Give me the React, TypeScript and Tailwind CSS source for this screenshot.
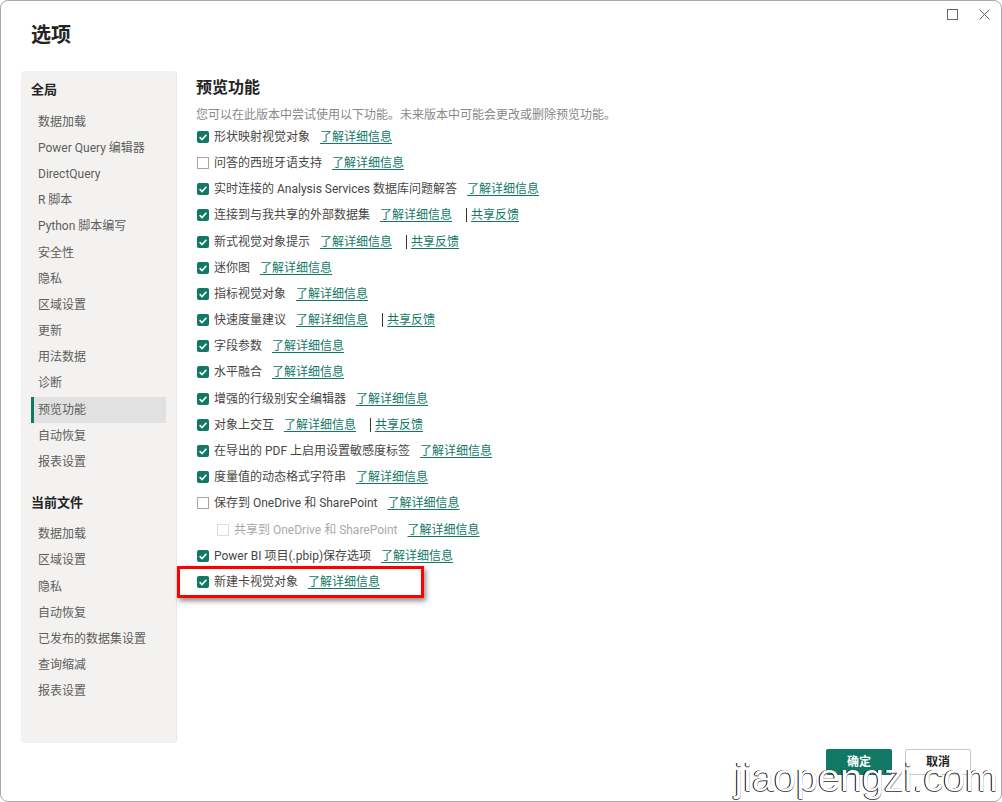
const globalItems = ["数据加载", "Power Query 编辑器", "DirectQuery", "R 脚本", "Python 脚本编写", "安全性", "隐私", "区域设置", "更新", "用法数据", "诊断", "预览功能", "自动恢复", "报表设置"]
const fileItems = ["数据加载", "区域设置", "隐私", "自动恢复", "已发布的数据集设置", "查询缩减", "报表设置"]

interface Feature {
  label: string
  checked?: boolean
  share?: boolean
  disabled?: boolean
  marked?: boolean
}

const features: Feature[] = [
  { label: "形状映射视觉对象", checked: true },
  { label: "问答的西班牙语支持" },
  { label: "实时连接的 Analysis Services 数据库问题解答", checked: true },
  { label: "连接到与我共享的外部数据集", checked: true, share: true },
  { label: "新式视觉对象提示", checked: true, share: true },
  { label: "迷你图", checked: true },
  { label: "指标视觉对象", checked: true },
  { label: "快速度量建议", checked: true, share: true },
  { label: "字段参数", checked: true },
  { label: "水平融合", checked: true },
  { label: "增强的行级别安全编辑器", checked: true },
  { label: "对象上交互", checked: true, share: true },
  { label: "在导出的 PDF 上启用设置敏感度标签", checked: true },
  { label: "度量值的动态格式字符串", checked: true },
  { label: "保存到 OneDrive 和 SharePoint" },
  { label: "共享到 OneDrive 和 SharePoint", disabled: true },
  { label: "Power BI 项目(.pbip)保存选项", checked: true },
  { label: "新建卡视觉对象", checked: true, marked: true },
]

function Checkbox({ checked, disabled }: { checked?: boolean; disabled?: boolean }) {
  if (checked) {
    return (
      <span className="flex h-[12px] w-[12px] shrink-0 items-center justify-center rounded-[2px] bg-[#117865]">
        <svg width="10" height="10" viewBox="0 0 10 10" fill="none">
          <path d="M1.6 5.2 4 7.5 8.4 2.8" stroke="white" strokeWidth="1.6" />
        </svg>
      </span>
    )
  }
  return (
    <span className={`h-[12px] w-[12px] shrink-0 border ${disabled ? "border-[#dcdcdc]" : "border-[#a6a6a6]"}`} />
  )
}

function SideList({ title, items, active }: { title: string; items: string[]; active?: string }) {
  return (
    <div>
      <div className="flex h-[20px] items-center pl-[10px] text-[13px] font-semibold text-[#252423]">{title}</div>
      <div className="mt-[8.5px] flex flex-col">
        {items.map((item) => (
          <div
            key={item}
            className={`mx-[10px] flex h-[26.2px] items-center border-l-[3px] pl-[4px] text-[12px] text-[#605e5c] ${
              item === active ? "border-[#117865] bg-[#e1e1e1]" : "border-transparent"
            }`}
          >
            {item}
          </div>
        ))}
      </div>
    </div>
  )
}

function FeatureRow({ feature }: { feature: Feature }) {
  return (
    <div className={`relative flex h-[26.2px] items-center text-[12px] ${feature.disabled ? "pl-[21px]" : "pl-[1px]"}`}>
      <Checkbox checked={feature.checked} disabled={feature.disabled} />
      <span className={`ml-[5px] ${feature.disabled ? "text-[#a9a9a9]" : "text-[#484644]"}`}>{feature.label}</span>
      <a className="ml-[10px] text-[#117865] underline underline-offset-2">了解详细信息</a>
      {feature.share && (
        <>
          <span className="ml-[14px] h-[14px] w-px bg-[#333]" />
          <a className="ml-[4px] text-[#117865] underline underline-offset-2">共享反馈</a>
        </>
      )}
      {feature.marked && (
        <div className="absolute left-[-19px] top-[-3px] h-[32px] w-[247px] border-[3px] border-[#ff0000] shadow-[2px_3px_5px_rgba(0,0,0,0.45)]" />
      )}
    </div>
  )
}

export default function App() {
  return (
    <div className="relative flex h-[802px] w-[1002px] flex-col overflow-hidden rounded-[8px] border border-[#a8a8a8] bg-white font-['Roboto','Noto_Sans_CJK_SC',sans-serif]">
      <div className="absolute right-[11px] top-[8px] flex items-center gap-[21px]">
        <svg width="11" height="11" viewBox="0 0 11 11" fill="none">
          <rect x="0.5" y="0.5" width="10" height="10" stroke="#666" />
        </svg>
        <svg width="11" height="11" viewBox="0 0 11 11" fill="none">
          <path d="M0.5 0.5 10.5 10.5M10.5 0.5 0.5 10.5" stroke="#666" />
        </svg>
      </div>

      <div className="flex h-[70px] items-start pl-[30px] pt-[20px] text-[20px] font-semibold leading-[28px] text-[#252423]">选项</div>

      <div className="flex flex-1">
        <aside className="ml-[20px] flex h-[672px] w-[156px] flex-col gap-[17.5px] rounded-[4px] border-r border-[#e6e6e6] bg-[#f3f2f1] pt-[9px]">
          <SideList title="全局" items={globalItems} active="预览功能" />
          <SideList title="当前文件" items={fileItems} />
        </aside>

        <main className="ml-[19px] flex-1">
          <h1 className="pt-[5px] text-[16px] font-semibold leading-[24px] text-[#252423]">预览功能</h1>
          <p className="mt-[6px] h-[17.7px] text-[12px] leading-[18px] text-[#8a8886]">您可以在此版本中尝试使用以下功能。未来版本中可能会更改或删除预览功能。</p>
          <div className="flex flex-col">
            {features.map((feature) => (
              <FeatureRow key={feature.label} feature={feature} />
            ))}
          </div>
        </main>
      </div>

      <div className="absolute bottom-[26px] right-[30px] flex gap-[13px] text-[12px] font-semibold">
        <button className="h-[26px] w-[66px] rounded-[2px] bg-[#117865] text-white">确定</button>
        <button className="h-[26px] w-[66px] rounded-[2px] border border-[#c8c6c4] bg-white text-[#252423]">取消</button>
      </div>

      <div className="absolute bottom-[0px] right-[3px] font-['Liberation_Sans',sans-serif] text-[39.5px] leading-[48px] text-white [text-shadow:-1px_0_0_#000,0_1px_0_#555]">
        jiaopengzi.com
      </div>
    </div>
  )
}
